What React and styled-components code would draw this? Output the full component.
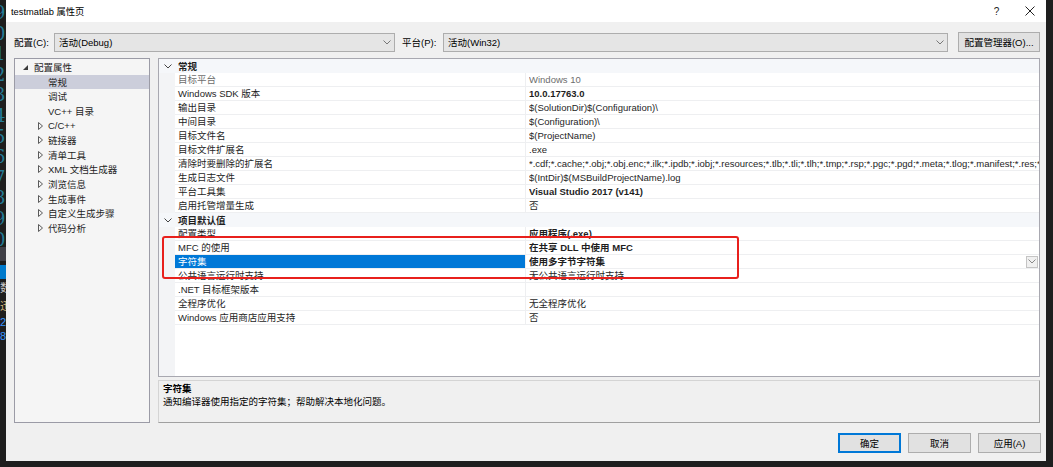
import React from 'react';
import styled, { createGlobalStyle } from 'styled-components';

const GlobalStyle = createGlobalStyle`
  html, body { margin: 0; padding: 0; background: #1e1e1e; }
  body {
    font-family: "Liberation Sans", "Noto Sans CJK SC", sans-serif;
    font-size: 9.5px;
    color: #1b1b1b;
  }
  * { box-sizing: border-box; }
`;

const Screen = styled.div`
  width: 1053px;
  height: 467px;
  display: flex;
  overflow: hidden;
  background: #1e1e1e;
`;

const EditorStrip = styled.div`
  width: 6px;
  flex: none;
  overflow: hidden;
  display: flex;
  flex-direction: column;
  padding-top: 3px;
`;

const LineNo = styled.div`
  height: 20.6px;
  line-height: 20.6px;
  margin-left: -6px;
  font-family: "DejaVu Serif", serif;
  font-size: 18px;
  color: #237a95;
  white-space: nowrap;
`;

const EditorBlock = styled.div`
  height: ${p => p.h}px;
  margin-top: ${p => p.mt || 0}px;
  background: ${p => p.bg};
  color: ${p => p.color || '#ccc'};
  font-size: 11px;
  line-height: ${p => p.h}px;
  white-space: nowrap;
`;

const Dialog = styled.div`
  width: 1040px;
  height: 461px;
  flex: none;
  background: #f0f0f0;
  display: flex;
  flex-direction: column;
`;

const TitleBar = styled.div`
  height: 22px;
  flex: none;
  background: #fff;
  display: flex;
  align-items: center;
  padding-left: 5px;
`;

const Title = styled.div`
  flex: 1;
  color: #000;
  font-size: 9.3px;
`;

const CaptionButton = styled.div`
  width: 33px;
  height: 22px;
  display: flex;
  align-items: center;
  justify-content: center;
  color: #222;
  font-size: 10px;
`;

const Body = styled.div`
  flex: 1;
  display: flex;
  flex-direction: column;
  padding: 10px 6px 8px 8px;
`;

const ConfigRow = styled.div`
  height: 20px;
  display: flex;
  align-items: center;
`;

const FieldLabel = styled.div`
  width: ${p => p.w}px;
  padding-left: ${p => p.pl || 0}px;
  flex: none;
  white-space: nowrap;
  color: #000;
`;

const Combo = styled.div`
  width: ${p => p.w}px;
  height: 19px;
  flex: none;
  display: flex;
  align-items: center;
  justify-content: space-between;
  padding: 0 3px 0 4px;
  background: #e5e5e5;
  border: 1px solid #adadad;
  color: #000;
`;

const PushButton = styled.div`
  width: ${p => p.w || 63}px;
  height: 20px;
  flex: none;
  margin-left: ${p => p.ml || 0}px;
  display: flex;
  align-items: center;
  justify-content: center;
  background: #e1e1e1;
  border: 1px solid ${p => (p.primary ? '#0078d7' : '#adadad')};
  box-shadow: ${p => (p.primary ? 'inset 0 0 0 1px #0078d7' : 'none')};
  color: #000;
  white-space: nowrap;
`;

const Main = styled.div`
  margin-top: 6px;
  height: 365px;
  display: flex;
  gap: 8px;
`;

const Tree = styled.div`
  width: 136px;
  flex: none;
  background: #f5f5f5;
  border: 1px solid #9b9ba6;
  padding-top: 1px;
`;

const TreeItem = styled.div`
  height: 14.6px;
  display: flex;
  align-items: center;
  padding-left: ${p => p.indent}px;
  background: ${p => (p.selected ? '#cccedb' : 'transparent')};
  white-space: nowrap;
  color: #1e1e1e;
`;

const ToggleSlot = styled.span`
  width: ${p => p.w}px;
  flex: none;
  display: flex;
  align-items: center;
`;

const RightColumn = styled.div`
  flex: 1;
  display: flex;
  flex-direction: column;
  gap: 3px;
  min-width: 0;
`;

const Grid = styled.div`
  position: relative;
  height: 319px;
  flex: none;
  overflow: hidden;
  border: 1px solid #a8a8b0;
  background: linear-gradient(to right, #f3f4f6 16px, #fff 16px);
`;

const CategoryRow = styled.div`
  height: 14px;
  display: grid;
  grid-template-columns: 16px 1fr;
  align-items: center;
  background: #f5f7fa;
  font-weight: bold;
  color: #1e1e1e;
`;

const CategoryTitle = styled.span`
  padding-left: 3px;
`;

const PropRow = styled.div`
  height: 14px;
  display: grid;
  grid-template-columns: 16px 350px 1fr;
`;

const Gutter = styled.div`
  display: flex;
  align-items: center;
  justify-content: center;
  padding-left: 1px;
`;

const NameCell = styled.div`
  padding-left: 3px;
  line-height: 13px;
  border-bottom: 1px solid #eeeff1;
  white-space: nowrap;
  overflow: hidden;
  background: ${p => (p.selected ? '#0078d7' : 'transparent')};
  color: ${p => (p.selected ? '#fff' : p.muted ? '#6d6d6d' : '#1e1e1e')};
`;

const ValueCell = styled.div`
  display: flex;
  align-items: center;
  min-width: 0;
  padding-left: 3px;
  border-left: 1px solid #eeeff1;
  border-bottom: 1px solid #eeeff1;
  font-weight: ${p => (p.bold ? 'bold' : 'normal')};
  color: ${p => (p.muted ? '#6d6d6d' : '#1e1e1e')};
`;

const ValueText = styled.span`
  flex: 1;
  white-space: nowrap;
  overflow: hidden;
  line-height: 13px;
`;

const DropButton = styled.span`
  width: 12px;
  height: 12px;
  flex: none;
  margin-right: 1px;
  display: flex;
  align-items: center;
  justify-content: center;
  background: #f0f0f0;
  border: 1px solid #c4c4c4;
`;

const Annotation = styled.div`
  position: absolute;
  left: 3px;
  top: 177px;
  width: 577px;
  height: 43px;
  border: 2px solid #e8201c;
  border-radius: 3px;
  pointer-events: none;
`;

const DescPanel = styled.div`
  height: 43px;
  flex: none;
  padding: 1px 4px;
  border: 1px solid;
  border-color: #d4d4d4 #a0a0a0 #a0a0a0 #d4d4d4;
  background: #f0f0f0;
  line-height: 13px;
  color: #000;
`;

const DescTitle = styled.div`
  font-weight: bold;
`;

const Footer = styled.div`
  margin-top: 10px;
  display: flex;
  justify-content: flex-end;
  gap: 7px;
  margin-right: -1px;
`;

const Chevron = ({ color = '#777' }) => (
  <svg width="8" height="5" viewBox="0 0 8 5">
    <polyline points="0.5,0.5 4,4 7.5,0.5" fill="none" stroke={color} strokeWidth="1" />
  </svg>
);

const Expanded = () => (
  <svg width="5" height="5" viewBox="0 0 5 5">
    <polygon points="5,0 5,5 0,5" fill="#3c3c3c" />
  </svg>
);

const Collapsed = () => (
  <svg width="5" height="8" viewBox="0 0 5 8">
    <polygon points="0.5,0.5 4.5,4 0.5,7.5" fill="none" stroke="#5a5a5a" strokeWidth="1" />
  </svg>
);

const CloseIcon = () => (
  <svg width="10" height="10" viewBox="0 0 10 10">
    <path d="M0.5 0.5 L9.5 9.5 M9.5 0.5 L0.5 9.5" stroke="#222" strokeWidth="1" />
  </svg>
);

const treeChildren = [
  { label: '常规', selected: true },
  { label: '调试' },
  { label: 'VC++ 目录' },
  { label: 'C/C++', toggle: true },
  { label: '链接器', toggle: true },
  { label: '清单工具', toggle: true },
  { label: 'XML 文档生成器', toggle: true },
  { label: '浏览信息', toggle: true },
  { label: '生成事件', toggle: true },
  { label: '自定义生成步骤', toggle: true },
  { label: '代码分析', toggle: true },
];

const categories = [
  {
    title: '常规',
    rows: [
      { name: '目标平台', value: 'Windows 10', muted: true },
      { name: 'Windows SDK 版本', value: '10.0.17763.0', bold: true },
      { name: '输出目录', value: '$(SolutionDir)$(Configuration)\\' },
      { name: '中间目录', value: '$(Configuration)\\' },
      { name: '目标文件名', value: '$(ProjectName)' },
      { name: '目标文件扩展名', value: '.exe' },
      {
        name: '清除时要删除的扩展名',
        value:
          '*.cdf;*.cache;*.obj;*.obj.enc;*.ilk;*.ipdb;*.iobj;*.resources;*.tlb;*.tli;*.tlh;*.tmp;*.rsp;*.pgc;*.pgd;*.meta;*.tlog;*.manifest;*.res;*.pch;*.exp;*.idb;*.rep;*.xdc;*.pdb;*_manifest.rc;*.bsc;*.sbr;*.xml;*.metagen;*.bi',
      },
      { name: '生成日志文件', value: '$(IntDir)$(MSBuildProjectName).log' },
      { name: '平台工具集', value: 'Visual Studio 2017 (v141)', bold: true },
      { name: '启用托管增量生成', value: '否' },
    ],
  },
  {
    title: '项目默认值',
    rows: [
      { name: '配置类型', value: '应用程序(.exe)', bold: true },
      { name: 'MFC 的使用', value: '在共享 DLL 中使用 MFC', bold: true },
      { name: '字符集', value: '使用多字节字符集', bold: true, selected: true },
      { name: '公共语言运行时支持', value: '无公共语言运行时支持' },
      { name: '.NET 目标框架版本', value: '' },
      { name: '全程序优化', value: '无全程序优化' },
      { name: 'Windows 应用商店应用支持', value: '否' },
    ],
  },
];

const lineDigits = ['9', '0', '1', '2', '3', '4', '5', '6', '7', '8', '9', '0'];

export default function App() {
  return (
    <>
      <GlobalStyle />
      <Screen>
        <EditorStrip>
          {lineDigits.map((d, i) => (
            <LineNo key={i}>{d}</LineNo>
          ))}
          <EditorBlock h={14} mt={-3} bg="#3f3f46" />
          <EditorBlock h={14} mt={4} bg="#007acc" />
          <EditorBlock h={18} bg="transparent" color="#c8c8c8">数</EditorBlock>
          <EditorBlock h={18} bg="transparent" color="#d7ba7d">迅</EditorBlock>
          <EditorBlock h={14} bg="transparent" color="#3794ff">2</EditorBlock>
          <EditorBlock h={14} bg="transparent" color="#3794ff">8</EditorBlock>
        </EditorStrip>

        <Dialog>
          <TitleBar>
            <Title>testmatlab 属性页</Title>
            <CaptionButton>?</CaptionButton>
            <CaptionButton>
              <CloseIcon />
            </CaptionButton>
          </TitleBar>

          <Body>
            <ConfigRow>
              <FieldLabel w={40}>配置(C):</FieldLabel>
              <Combo w={341}>
                <span>活动(Debug)</span>
                <Chevron />
              </Combo>
              <FieldLabel w={48} pl={7}>平台(P):</FieldLabel>
              <Combo w={505}>
                <span>活动(Win32)</span>
                <Chevron />
              </Combo>
              <PushButton w={82} ml={10}>配置管理器(O)...</PushButton>
            </ConfigRow>

            <Main>
              <Tree>
                <TreeItem indent={8}>
                  <ToggleSlot w={11}>
                    <Expanded />
                  </ToggleSlot>
                  配置属性
                </TreeItem>
                {treeChildren.map(item => (
                  <TreeItem key={item.label} indent={23} selected={item.selected}>
                    <ToggleSlot w={10}>{item.toggle && <Collapsed />}</ToggleSlot>
                    {item.label}
                  </TreeItem>
                ))}
              </Tree>

              <RightColumn>
                <Grid>
                  {categories.map(cat => (
                    <React.Fragment key={cat.title}>
                      <CategoryRow>
                        <Gutter>
                          <Chevron color="#444" />
                        </Gutter>
                        <CategoryTitle>{cat.title}</CategoryTitle>
                      </CategoryRow>
                      {cat.rows.map(row => (
                        <PropRow key={row.name}>
                          <Gutter />
                          <NameCell selected={row.selected} muted={row.muted}>
                            {row.name}
                          </NameCell>
                          <ValueCell bold={row.bold} muted={row.muted}>
                            <ValueText>{row.value}</ValueText>
                            {row.selected && (
                              <DropButton>
                                <Chevron color="#888" />
                              </DropButton>
                            )}
                          </ValueCell>
                        </PropRow>
                      ))}
                    </React.Fragment>
                  ))}
                  <Annotation />
                </Grid>

                <DescPanel>
                  <DescTitle>字符集</DescTitle>
                  <div>通知编译器使用指定的字符集；帮助解决本地化问题。</div>
                </DescPanel>
              </RightColumn>
            </Main>

            <Footer>
              <PushButton primary>确定</PushButton>
              <PushButton>取消</PushButton>
              <PushButton>应用(A)</PushButton>
            </Footer>
          </Body>
        </Dialog>
      </Screen>
    </>
  );
}
